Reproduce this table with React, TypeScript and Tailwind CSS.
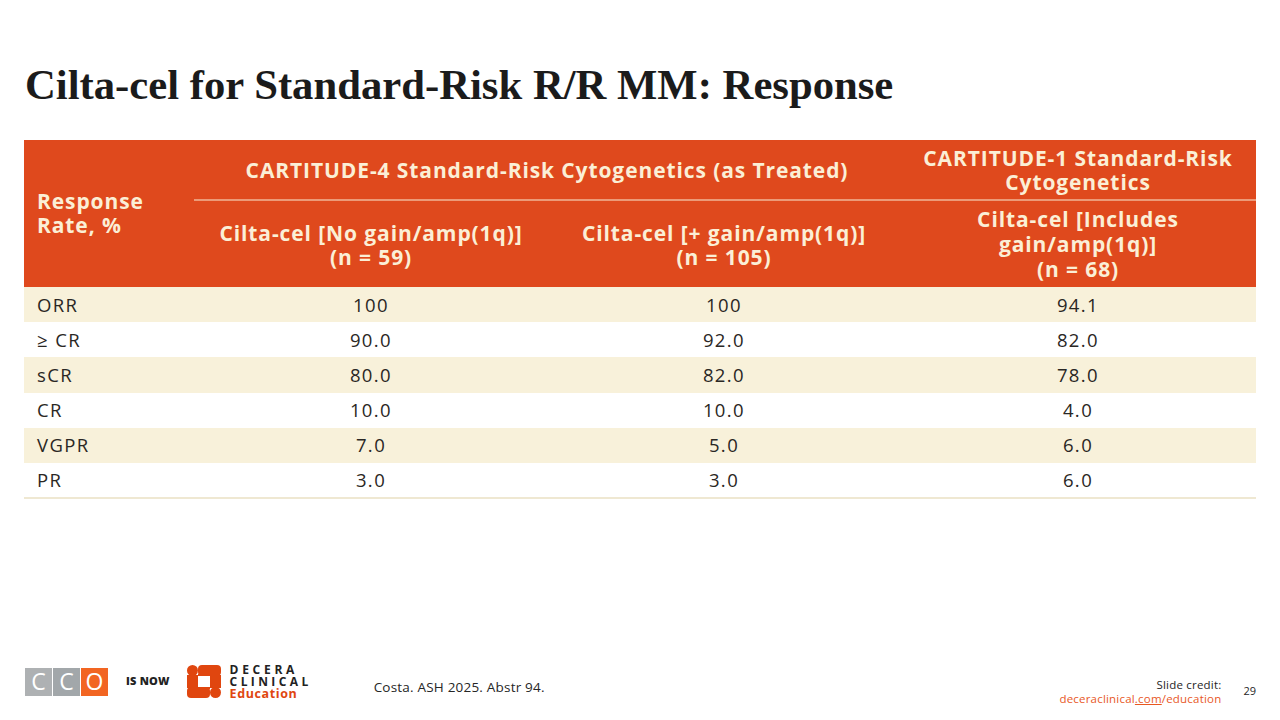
import React from "react";

const rows: [string, string, string, string][] = [
  ["ORR", "100", "100", "94.1"],
  ["≥ CR", "90.0", "92.0", "82.0"],
  ["sCR", "80.0", "82.0", "78.0"],
  ["CR", "10.0", "10.0", "4.0"],
  ["VGPR", "7.0", "5.0", "6.0"],
  ["PR", "3.0", "3.0", "6.0"],
];

function CcoLogo() {
  return (
    <div className="flex gap-px h-[28px]">
      <div className="w-[27px] bg-[#aeb1b3] flex items-center justify-center text-white text-[23px] leading-none">C</div>
      <div className="w-[27px] bg-[#a2a7aa] flex items-center justify-center text-white text-[23px] leading-none">C</div>
      <div className="w-[27px] bg-[#f26522] flex items-center justify-center text-white text-[23px] leading-none">O</div>
    </div>
  );
}

function DeceraMark() {
  return (
    <svg width="34" height="33" viewBox="0 0 34 33">
      <g fill="#e0460f">
        <circle cx="5.5" cy="5.5" r="5.5" />
        <rect x="11" y="0" width="23" height="11" rx="4" />
        <rect x="0" y="10" width="11" height="13" />
        <rect x="23" y="10" width="11" height="13" />
        <rect x="0" y="22" width="23" height="11" rx="4" />
        <circle cx="28.5" cy="27.5" r="5.5" />
        <rect x="11" y="9" width="12" height="2" />
        <rect x="11" y="22" width="12" height="2" />
      </g>
    </svg>
  );
}

export default function App() {
  const th = "font-bold text-[#fbefd6] text-[21px] leading-[24px] tracking-[0.9px]";
  const td = "text-[18.5px] text-[#2a2724] tracking-[1.4px]";
  return (
    <div className="w-[1280px] h-[720px] bg-white relative overflow-hidden font-['Open_Sans',sans-serif]">
      <h1 className="absolute left-[25px] top-[58px] font-['Liberation_Serif',serif] font-bold text-[42.7px] leading-[54px] text-[#1b1b1b]">
        Cilta-cel for Standard-Risk R/R MM: Response
      </h1>

      <table className="absolute left-[24px] top-[140px] w-[1232px] table-fixed border-collapse">
        <colgroup>
          <col className="w-[170px]" />
          <col className="w-[354px]" />
          <col className="w-[352px]" />
          <col className="w-[356px]" />
        </colgroup>
        <thead>
          <tr className="bg-[#df491d] h-[60px]">
            <th rowSpan={2} className={`${th} text-left align-middle pl-[13px] pb-[2px]`}>
              Response<br />Rate, %
            </th>
            <th colSpan={2} className={`${th} text-center align-middle`}>
              CARTITUDE-4 Standard-Risk Cytogenetics (as Treated)
            </th>
            <th className={`${th} text-center align-middle px-2`}>
              CARTITUDE-1 Standard-Risk<br />Cytogenetics
            </th>
          </tr>
          <tr className="bg-[#df491d] h-[87px]">
            <th className={`${th} text-center align-middle border-t-2 border-[#ec9a78] pt-[2px]`}>
              Cilta-cel [No gain/amp(1q)]<br />(n = 59)
            </th>
            <th className={`${th} text-center align-middle border-t-2 border-[#ec9a78] pt-[2px]`}>
              Cilta-cel [+ gain/amp(1q)]<br />(n = 105)
            </th>
            <th className={`${th} text-center align-middle border-t-2 border-[#ec9a78] leading-[25px]`}>
              Cilta-cel [Includes<br />gain/amp(1q)]<br />(n = 68)
            </th>
          </tr>
        </thead>
        <tbody>
          {rows.map((r, i) => (
            <tr key={i} className={`h-[35.2px] ${i % 2 === 0 ? "bg-[#f8f1da]" : "bg-white"} ${i === rows.length - 1 ? "border-b-2 border-[#efe8d2]" : ""}`}>
              <td className={`${td} pl-[13px]`}>{r[0]}</td>
              <td className={`${td} text-center`}>{r[1]}</td>
              <td className={`${td} text-center`}>{r[2]}</td>
              <td className={`${td} text-center`}>{r[3]}</td>
            </tr>
          ))}
        </tbody>
      </table>

      <footer className="absolute left-[25px] right-[24px] top-[665px] flex items-center h-[33px]">
        <CcoLogo />
        <span className="ml-[18px] text-[11px] font-extrabold text-[#222] tracking-[0.2px]">IS NOW</span>
        <div className="ml-[17px] flex items-center gap-[9px]">
          <DeceraMark />
          <div className="flex flex-col text-[12px] leading-[12px] font-bold">
            <span className="text-[#222] tracking-[3.7px]">DECERA</span>
            <span className="text-[#222] tracking-[3.4px]">CLINICAL</span>
            <span className="text-[#e0460f] text-[12.5px] tracking-[0.6px]">Education</span>
          </div>
        </div>
        <span className="ml-[62px] mt-[12px] text-[13.5px] text-[#262626] tracking-[0.2px]">Costa. ASH 2025. Abstr 94.</span>
        <div className="ml-auto flex flex-col items-end text-[11.5px] leading-[14px] mt-[20px] tracking-[0.2px]">
          <span className="text-[#262626]">Slide credit:</span>
          <span className="text-[#e8581f]">
            deceraclinical<span className="underline">.com</span>/education
          </span>
        </div>
        <span className="ml-[22px] mt-[20px] text-[11px] text-[#262626]">29</span>
      </footer>
    </div>
  );
}
